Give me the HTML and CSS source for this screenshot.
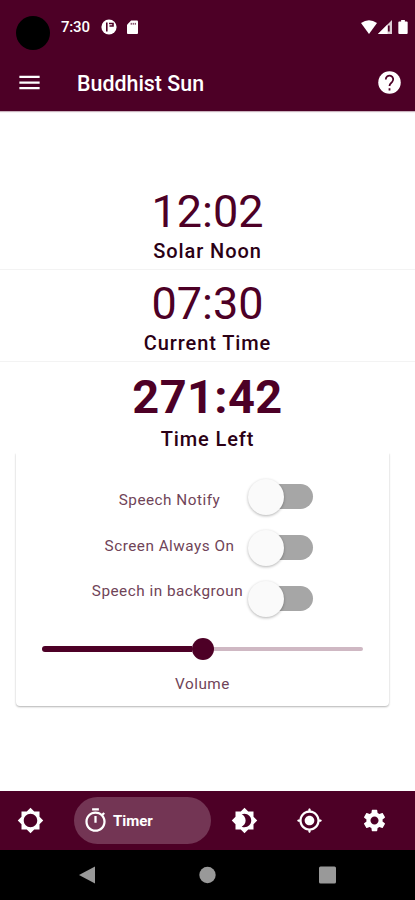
FILE: index.html
```html
<!DOCTYPE html>
<html lang="en">
<head>
    <meta charset="UTF-8">
    <meta name="viewport" content="width=device-width, initial-scale=1.0">
    <title>Buddhist Sun</title>
    <link rel="stylesheet" href="styles.css">
</head>
<body>
    <header>
        <div class="status-bar">
            <span class="camera"></span>
            <span class="clock">7:30</span>
            <svg class="status-app" viewBox="0 0 16 16"><circle cx="8" cy="8" r="7.6" fill="#fff"/><path d="M5.800 3.500v9M8 4.500h4v2.500H8.500" fill="none" stroke="#4d0026" stroke-width="1.6"/></svg>
            <svg class="status-card" viewBox="0 0 12 15"><path d="M4.5.5H11q1 0 1 1V14q0 1-1 1H1q-1 0-1-1V5z" fill="#fff"/><path d="M4.6 3v2M6.8 3v2M9 3v2" stroke="#4d0026" stroke-width="1"/></svg>
            <span class="spacer"></span>
            <svg class="wifi" viewBox="0 0 16 14"><path d="M0 3Q8-2.500 16 3L8 14z" fill="#fff"/></svg>
            <svg class="signal" viewBox="0 0 14 14"><path d="M0 14L14 0v14z" fill="#fff" opacity=".8"/><path d="M0 14L9.500 4.500V14z" fill="#fff"/><path d="M10.800 5.500v6" stroke="#4d0026" stroke-width="1.800"/></svg>
            <svg class="battery" viewBox="0 0 10 15"><path d="M3 0h4v1.500h2q1 0 1 1V14q0 1-1 1H1q-1 0-1-1V2.500q0-1 1-1h2z" fill="#fff"/></svg>
        </div>
        <div class="app-bar">
            <svg class="icon" viewBox="0 0 24 24"><path d="M3 18h18v-2H3v2zm0-5h18v-2H3v2zm0-7v2h18V6H3z"/></svg>
            <h1>Buddhist Sun</h1>
            <svg class="icon" viewBox="0 0 24 24"><circle cx="12" cy="12" r="10"/><path d="M8.700 9.300a3.300 3.300 0 1 1 5.700 2.200C13.200 12.700 12 13.200 12 15.200M12 17.200v1.800" fill="none" stroke="#4d0026" stroke-width="1.600"/></svg>
        </div>
    </header>

    <main>
        <section class="time-row">
            <div class="time">12:02</div>
            <div class="label">Solar Noon</div>
        </section>
        <section class="time-row">
            <div class="time">07:30</div>
            <div class="label">Current Time</div>
        </section>
        <section class="time-row time-left">
            <div class="time">271:42</div>
            <div class="label">Time Left</div>
        </section>

        <div class="card">
            <div class="settings">
                <div class="names">
                    <div>Speech Notify</div>
                    <div>Screen Always On</div>
                    <div class="clipped">Speech in backgroun</div>
                </div>
                <div class="switches">
                    <div class="switch"><span></span></div>
                    <div class="switch"><span></span></div>
                    <div class="switch"><span></span></div>
                </div>
            </div>
            <div class="slider">
                <span class="filled"></span>
                <span class="thumb"></span>
                <span class="rest"></span>
            </div>
            <div class="volume">Volume</div>
        </div>
    </main>

    <nav class="tabs">
        <svg class="icon" viewBox="0 0 24 24"><path d="M20 15.310L23.310 12 20 8.690V4h-4.690L12 .69 8.690 4H4v4.690L.69 12 4 15.310V20h4.690L12 23.310 15.310 20H20v-4.690zM12 18c-3.310 0-6-2.690-6-6s2.690-6 6-6 6 2.690 6 6-2.690 6-6 6z"/></svg>
        <div class="active-tab">
            <svg class="icon" viewBox="0 0 24 24"><path d="M15 1H9v2h6V1zm-4 13h2V8h-2v6zm8.030-6.610l1.420-1.420c-.43-.51-.9-.99-1.410-1.410l-1.420 1.420C16.070 4.740 14.120 4 12 4c-4.970 0-9 4.030-9 9s4.020 9 9 9 9-4.030 9-9c0-2.120-.74-4.070-1.970-5.610zM12 20c-3.870 0-7-3.130-7-7s3.130-7 7-7 7 3.130 7 7-3.130 7-7 7z"/></svg>
            <span>Timer</span>
        </div>
        <svg class="icon" viewBox="0 0 24 24"><path d="M20 8.690V4h-4.690L12 .69 8.690 4H4v4.690L.69 12 4 15.310V20h4.690L12 23.310 15.310 20H20v-4.690L23.310 12 20 8.690zM12 18c-.89 0-1.740-.2-2.500-.55C11.560 16.500 13 14.420 13 12s-1.440-4.500-3.500-5.450C10.260 6.200 11.110 6 12 6c3.310 0 6 2.690 6 6s-2.690 6-6 6z"/></svg>
        <svg class="icon" viewBox="0 0 24 24"><path d="M12 7.700c-2.370 0-4.300 1.930-4.300 4.300s1.930 4.300 4.300 4.300 4.300-1.930 4.300-4.300-1.930-4.300-4.300-4.300zm8.940 3.300c-.46-4.170-3.770-7.480-7.940-7.940V1.800L12 1l-1 .8v1.260C6.830 3.520 3.520 6.830 3.060 11H1.800L1 12l.8 1h1.260c.46 4.170 3.770 7.480 7.940 7.940v1.260l1 .8 1-.8v-1.260c4.170-.46 7.480-3.770 7.940-7.940h1.260l.8-1-.8-1h-1.260zM12 19c-3.870 0-7-3.130-7-7s3.130-7 7-7 7 3.130 7 7-3.130 7-7 7z"/></svg>
        <svg class="icon" viewBox="0 0 24 24"><path d="M19.140 12.940c.04-.3.06-.61.06-.94 0-.32-.02-.64-.07-.94l2.030-1.580c.18-.14.23-.41.12-.61l-1.920-3.320c-.12-.22-.37-.29-.59-.22l-2.390.96c-.5-.38-1.030-.7-1.620-.94l-.36-2.540c-.04-.24-.24-.41-.48-.41h-3.840c-.24 0-.43.17-.47.41l-.36 2.540c-.59.24-1.130.57-1.620.94l-2.390-.96c-.22-.08-.47 0-.59.22L2.740 8.870c-.12.21-.08.47.12.61l2.030 1.580c-.05.3-.09.63-.09.94s.02.64.07.94l-2.030 1.580c-.18.14-.23.41-.12.61l1.920 3.320c.12.22.37.29.59.22l2.390-.96c.5.38 1.030.7 1.620.94l.36 2.540c.05.24.24.41.48.41h3.840c.24 0 .44-.17.47-.41l.36-2.540c.59-.24 1.130-.56 1.620-.94l2.390.96c.22.08.47 0 .59-.22l1.920-3.320c.12-.22.07-.47-.12-.61l-2.010-1.580zM12 15.600c-1.980 0-3.600-1.620-3.600-3.600s1.620-3.600 3.600-3.600 3.600 1.620 3.600 3.600-1.620 3.600-3.600 3.600z"/></svg>
    </nav>

    <div class="system-nav">
        <svg viewBox="0 0 17 18"><path d="M0 9L16 0.500v17z"/></svg>
        <svg viewBox="0 0 17 18"><circle cx="8.500" cy="9" r="8.200"/></svg>
        <svg viewBox="0 0 17 18"><rect y="0.500" width="17" height="17" rx="1.500"/></svg>
    </div>
</body>
</html>
```
FILE: styles.css
```css
* {
    box-sizing: border-box;
}

body {
    font-family: Roboto, "Liberation Sans", sans-serif;
    margin: 0;
    height: 900px;
    display: flex;
    flex-direction: column;
    background-color: #fff;
    color: #4d0026;
    overflow: hidden;
}

header {
    height: 111px;
    background-color: #4d0026;
    color: #fff;
    box-shadow: 0 1px 1px rgba(77, 0, 38, 0.3);
}

.status-bar {
    display: flex;
    align-items: center;
    height: 54px;
    padding: 0 7px 0 16px;
}

.camera {
    width: 34px;
    height: 34px;
    margin-top: 11px;
    border-radius: 50%;
    background-color: #000;
}

.clock {
    width: 29px;
    margin: 0 11px;
    font-size: 15px;
    font-weight: 500;
    letter-spacing: -0.2px;
}

.status-app {
    width: 16px;
    height: 16px;
}

.status-card {
    width: 11px;
    height: 14px;
    margin-left: 10px;
}

.spacer {
    flex: 1;
}

.wifi {
    width: 16px;
    height: 14px;
}

.signal {
    width: 14px;
    height: 14px;
    margin-left: 1px;
}

.battery {
    width: 10px;
    height: 14px;
    margin-left: 6px;
}

.icon {
    width: 27px;
    height: 27px;
    fill: #fff;
    flex-shrink: 0;
}

.app-bar {
    display: flex;
    align-items: center;
    height: 57px;
    padding: 0 12px 0 16px;
}

h1 {
    flex: 1;
    margin: 1px 0 0 34px;
    font-size: 21.4px;
    font-weight: 500;
}

main {
    flex: 1;
    padding-top: 67px;
}

.time-row {
    height: 92px;
    padding-top: 8px;
    border-bottom: 1px solid #f3f3f3;
    text-align: center;
}

.time {
    height: 53px;
    line-height: 52px;
    font-size: 45px;
    font-weight: 400;
}

.label {
    height: 24px;
    line-height: 24px;
    font-size: 20px;
    font-weight: 500;
    letter-spacing: 0.9px;
    color: #2b0015;
}

.time-left {
    height: 91px;
    border-bottom: none;
}

.time-left .time {
    height: 57px;
    line-height: 54px;
    font-size: 47px;
    font-weight: 700;
    letter-spacing: 0.4px;
}

.card {
    height: 253px;
    margin: 0 26px 0 16px;
    padding: 25px 26px 0;
    border-radius: 0 0 4px 4px;
    box-shadow: 0 1px 2px rgba(0, 0, 0, 0.3);
    clip-path: inset(0 -4px -4px -4px);
}

.settings {
    display: flex;
    height: 153px;
    padding-left: 49px;
}

.names {
    width: 157px;
    margin-right: 1px;
    font-size: 15.3px;
    font-weight: 400;
    letter-spacing: 0.5px;
    color: #704458;
    text-align: center;
    white-space: nowrap;
}

.names div {
    height: 45.5px;
    line-height: 44px;
}

.names .clipped {
    padding-right: 4px;
}

.switches {
    display: flex;
    flex-direction: column;
    gap: 26px;
    padding-top: 6px;
}

.switch {
    display: flex;
    align-items: center;
    width: 56px;
    height: 25px;
    margin-left: 8px;
    border-radius: 13px;
    background-color: #a6a6a6;
}

.switch span {
    flex-shrink: 0;
    width: 36px;
    height: 36px;
    margin-left: -9px;
    border-radius: 50%;
    background-color: #fafafa;
    box-shadow: 0 1px 3px rgba(0, 0, 0, 0.3);
}

.slider {
    display: flex;
    align-items: center;
    height: 36px;
}

.slider .filled {
    width: 150px;
    height: 6px;
    border-radius: 3px 0 0 3px;
    background-color: #4d0026;
}

.slider .thumb {
    width: 22px;
    height: 22px;
    border-radius: 50%;
    background-color: #4d0026;
}

.slider .rest {
    width: 149px;
    height: 4px;
    border-radius: 0 2px 2px 0;
    background-color: #cfb8c3;
}

.volume {
    height: 34px;
    line-height: 34px;
    font-size: 15.3px;
    font-weight: 400;
    letter-spacing: 0.5px;
    color: #704458;
    text-align: center;
}

.tabs {
    display: flex;
    align-items: center;
    height: 59px;
    padding-left: 17px;
    gap: 38px;
    background-color: #4d0026;
}

.active-tab {
    display: flex;
    flex-shrink: 0;
    align-items: center;
    width: 137px;
    height: 47px;
    margin: 0 -18px 0 -8px;
    border-radius: 24px;
    padding-left: 8px;
    gap: 4px;
    background-color: #733554;
    color: #fff;
    font-size: 15px;
    font-weight: 700;
}

.system-nav {
    display: flex;
    align-items: center;
    justify-content: center;
    height: 50px;
    gap: 103px;
    background-color: #000;
}

.system-nav svg {
    width: 17px;
    height: 18px;
    fill: #999;
}
```
